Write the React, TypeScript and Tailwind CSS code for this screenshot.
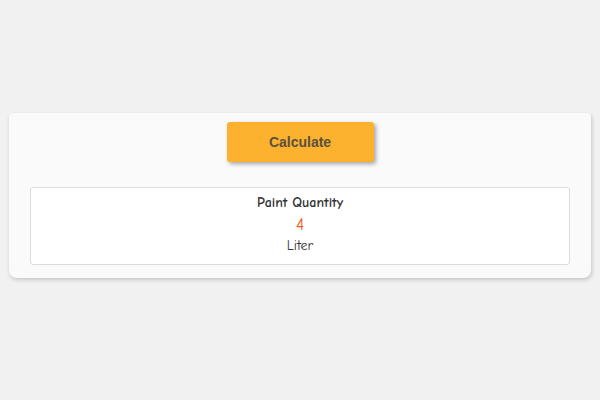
export default function App() {
  return (
    <div className="min-h-[400px] w-[600px] bg-[#f1f1f1] pt-[113px]">
      <div className="mx-[9px] rounded-b-lg rounded-t-sm bg-[#fafafa] px-[21px] pb-[13px] pt-[9px] shadow-[1px_2px_4px_rgba(0,0,0,0.18)]">
        <div className="flex justify-center">
          <button
            className="h-[40px] w-[147px] rounded-[3px] bg-[#fcb22f] font-['Liberation_Sans',Arial,sans-serif] text-[14px] font-bold text-[#5a5040] shadow-[2px_2px_4px_rgba(0,0,0,0.35)]"
          >
            Calculate
          </button>
        </div>
        <div className="mt-[25px] flex h-[78px] flex-col items-center rounded-[3px] border border-[#dcdcdc] bg-white pt-[6px] font-['Comic_Sans_MS','Comic_Neue',cursive] text-[#333]">
          <div className="text-[14px] font-semibold leading-[18px]">Paint Quantity</div>
          <div className="mt-[2px] text-[17px] leading-[21px] text-[#f05a22]">4</div>
          <div className="mt-[2px] text-[14px] leading-[18px]">Liter</div>
        </div>
      </div>
    </div>
  );
}
